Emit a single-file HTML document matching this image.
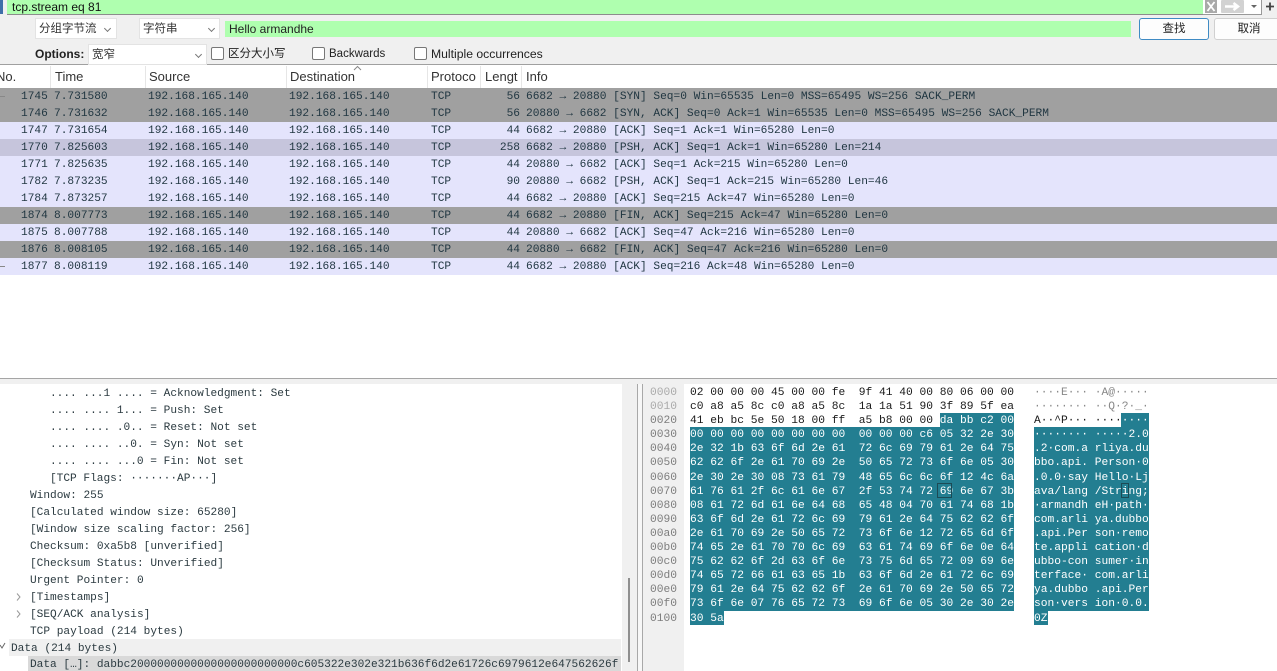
<!DOCTYPE html>
<html><head><meta charset="utf-8"><style>
html,body{margin:0;padding:0;background:#fff}
#p{position:relative;width:1277px;height:671px;overflow:hidden;background:#fff;font-family:"Liberation Sans","Noto Sans CJK SC",sans-serif;font-size:12px;color:#222}
.abs,#p div.abs{position:absolute}
.box{position:absolute;background:#fff;border:1px solid #e3e3e3;box-sizing:border-box;line-height:20px;padding-left:3px;color:#333}
.chev{position:absolute;width:4px;height:4px;border-right:1px solid #777;border-bottom:1px solid #777;transform:rotate(45deg)}
.cb{position:absolute;width:11px;height:11px;border:1px solid #777;border-radius:2px;background:#fff;top:47px}
.t{position:absolute;white-space:pre;line-height:16px}
.h{position:absolute;top:65px;height:23px;line-height:23px;font-size:13px;color:#333;white-space:pre}
.hs{position:absolute;top:66px;width:1px;height:22px;background:#e6e6e6}
.r{position:absolute;left:0;width:1277px;height:17px;line-height:17px;font-family:"Liberation Mono","DejaVu Sans Mono",monospace;font-size:11.18px;color:#1f3540;white-space:pre;background:#e4e4fc}
.r span{position:absolute;top:1px}
.r span:nth-child(1){left:21px}
.r span:nth-child(2){left:54px}
.r span:nth-child(3){left:148px}
.r span:nth-child(4){left:289px}
.r span:nth-child(5){left:431px}
.r span:nth-child(6){left:480px;width:40px;text-align:right}
.r span:nth-child(7){left:526px}
.g{background:#a0a0a0}
.d{background:#c6c5dc}
.tr{position:absolute;height:17px;line-height:17px;margin-top:1px;white-space:pre;font-family:"Liberation Mono","DejaVu Sans Mono",monospace;font-size:11.15px;color:#2b3a40}
.o,.x,.a{position:absolute;height:14.1px;line-height:14.1px;margin-top:1px;white-space:pre;font-family:"Liberation Mono","DejaVu Sans Mono",monospace;font-size:11.25px}
.o{left:650px;color:#7d7d7d}
.x{left:690px;color:#1a1a1a}
.a{left:1034px;color:#1a1a1a}
b{font-weight:normal;color:#fff}
.s{color:#fff}
.lt{color:#888}
.sel{position:absolute;background:#237e91}
</style></head><body><div id="p">

<!-- filter bar -->
<div class="abs" style="left:0;top:0;width:1277px;height:16px;background:#f0f0f0"></div>
<div class="abs" style="left:0;top:0;width:3px;height:14px;background:#3f6fa8"></div>
<div class="abs" style="left:7px;top:0;width:1196px;height:15px;background:#afffaf;border-bottom:1px solid #8c8c8c;box-sizing:border-box"></div>
<div class="t" style="left:12px;top:-1px;font-size:12px;color:#111">tcp.stream eq 81</div>
<div class="abs" style="left:1203px;top:0;width:59px;height:15px;background:#fff;border-bottom:1px solid #999;border-right:1px solid #999;box-sizing:border-box"></div>
<svg class="abs" style="left:1204px;top:0" width="73" height="15" viewBox="0 0 73 15">
<rect x="1" y="0" width="12" height="13" fill="#a9a9a9"/><path d="M3.5 2L10.500 11M10.500 2L3.500 11" stroke="#fff" stroke-width="1.8"/>
<rect x="17" y="0" width="23" height="13" rx="1" fill="#d2d2d2"/><path d="M21 6.500H33M29.500 3L34 6.500L29.500 10" stroke="#fff" stroke-width="2.500" fill="none"/>
<path d="M47 5H53L50 8Z" fill="#666"/>
<path d="M66 2.500V10.500M62 6.500H70" stroke="#444" stroke-width="1.800"/>
</svg>

<!-- toolbar -->
<div class="abs" style="left:0;top:16px;width:1277px;height:49px;background:#f0f0f0;border-bottom:1px solid #a0a0a0;box-sizing:border-box"></div>
<div class="box" style="left:35px;top:18px;width:82px;height:21px;font-size:11.5px">分组字节流</div><div class="chev" style="left:105px;top:26px"></div>
<div class="box" style="left:139px;top:18px;width:81px;height:21px;font-size:11.5px">字符串</div><div class="chev" style="left:209px;top:26px"></div>
<div class="abs" style="left:225px;top:21px;width:906px;height:16px;background:#afffaf"></div>
<div class="t" style="left:229px;top:21px;font-size:12px;color:#222">Hello armandhe</div>
<div class="abs" style="left:1139px;top:18px;width:70px;height:22px;background:#fdfdfd;border:1px solid #3f8bc4;border-radius:3px;box-sizing:border-box;text-align:center;line-height:20px;font-size:11.5px;color:#222">查找</div>
<div class="abs" style="left:1214px;top:18px;width:70px;height:22px;background:#fdfdfd;border:1px solid #d0d0d0;border-radius:3px;box-sizing:border-box;text-align:center;line-height:20px;font-size:11.5px;color:#222">取消</div>
<div class="t" style="left:35px;top:46px;font-size:12px;font-weight:bold;color:#222">Options:</div>
<div class="box" style="left:88px;top:44px;width:119px;height:21px;font-size:11.5px">宽窄</div><div class="chev" style="left:196px;top:52px"></div>
<div class="cb" style="left:211px"></div><div class="t" style="left:228px;top:46px;font-size:11.5px">区分大小写</div>
<div class="cb" style="left:312px"></div><div class="t" style="left:329px;top:46px;font-size:11.5px">Backwards</div>
<div class="cb" style="left:414px"></div><div class="t" style="left:431px;top:46px;font-size:12.2px">Multiple occurrences</div>

<!-- packet list header -->
<div class="abs" style="left:0;top:65px;width:1277px;height:23px;background:#fff"></div>
<div class="h" style="left:-4px">No.</div><div class="hs" style="left:50px"></div>
<div class="h" style="left:55px">Time</div><div class="hs" style="left:145px"></div>
<div class="h" style="left:149px">Source</div><div class="hs" style="left:286px"></div>
<div class="h" style="left:290px">Destination</div><div class="hs" style="left:427px"></div>
<div class="h" style="left:431px">Protoco</div><div class="hs" style="left:480px"></div>
<div class="h" style="left:485px">Lengt</div><div class="hs" style="left:521px"></div>
<div class="h" style="left:526px">Info</div>
<svg class="abs" style="left:353px;top:65px" width="9" height="6"><path d="M1 5L4.500 1.500L8 5" stroke="#888" fill="none"/></svg>

<!-- packets -->
<div class="r g" style="top:88px"><span>1745</span><span>7.731580</span><span>192.168.165.140</span><span>192.168.165.140</span><span>TCP</span><span>56</span><span>6682 → 20880 [SYN] Seq=0 Win=65535 Len=0 MSS=65495 WS=256 SACK_PERM</span></div>
<div class="r g" style="top:105px"><span>1746</span><span>7.731632</span><span>192.168.165.140</span><span>192.168.165.140</span><span>TCP</span><span>56</span><span>20880 → 6682 [SYN, ACK] Seq=0 Ack=1 Win=65535 Len=0 MSS=65495 WS=256 SACK_PERM</span></div>
<div class="r" style="top:122px"><span>1747</span><span>7.731654</span><span>192.168.165.140</span><span>192.168.165.140</span><span>TCP</span><span>44</span><span>6682 → 20880 [ACK] Seq=1 Ack=1 Win=65280 Len=0</span></div>
<div class="r d" style="top:139px"><span>1770</span><span>7.825603</span><span>192.168.165.140</span><span>192.168.165.140</span><span>TCP</span><span>258</span><span>6682 → 20880 [PSH, ACK] Seq=1 Ack=1 Win=65280 Len=214</span></div>
<div class="r" style="top:156px"><span>1771</span><span>7.825635</span><span>192.168.165.140</span><span>192.168.165.140</span><span>TCP</span><span>44</span><span>20880 → 6682 [ACK] Seq=1 Ack=215 Win=65280 Len=0</span></div>
<div class="r" style="top:173px"><span>1782</span><span>7.873235</span><span>192.168.165.140</span><span>192.168.165.140</span><span>TCP</span><span>90</span><span>20880 → 6682 [PSH, ACK] Seq=1 Ack=215 Win=65280 Len=46</span></div>
<div class="r" style="top:190px"><span>1784</span><span>7.873257</span><span>192.168.165.140</span><span>192.168.165.140</span><span>TCP</span><span>44</span><span>6682 → 20880 [ACK] Seq=215 Ack=47 Win=65280 Len=0</span></div>
<div class="r g" style="top:207px"><span>1874</span><span>8.007773</span><span>192.168.165.140</span><span>192.168.165.140</span><span>TCP</span><span>44</span><span>6682 → 20880 [FIN, ACK] Seq=215 Ack=47 Win=65280 Len=0</span></div>
<div class="r" style="top:224px"><span>1875</span><span>8.007788</span><span>192.168.165.140</span><span>192.168.165.140</span><span>TCP</span><span>44</span><span>20880 → 6682 [ACK] Seq=47 Ack=216 Win=65280 Len=0</span></div>
<div class="r g" style="top:241px"><span>1876</span><span>8.008105</span><span>192.168.165.140</span><span>192.168.165.140</span><span>TCP</span><span>44</span><span>20880 → 6682 [FIN, ACK] Seq=47 Ack=216 Win=65280 Len=0</span></div>
<div class="r" style="top:258px"><span>1877</span><span>8.008119</span><span>192.168.165.140</span><span>192.168.165.140</span><span>TCP</span><span>44</span><span>6682 → 20880 [ACK] Seq=216 Ack=48 Win=65280 Len=0</span></div>
<div class="abs" style="left:0;top:96px;width:5px;height:1px;background:#888"></div>
<div class="abs" style="left:0;top:266px;width:5px;height:1px;background:#888"></div>

<!-- splitter -->
<div class="abs" style="left:0;top:378px;width:1277px;height:1px;background:#a5a5a5"></div>
<div class="abs" style="left:0;top:379px;width:1277px;height:5px;background:#f0f0f0"></div>

<!-- tree pane -->
<div class="abs" style="left:622px;top:384px;width:15px;height:287px;background:#f0f0f0"></div>
<div class="abs" style="left:637px;top:384px;width:1px;height:287px;background:#a8a8a8"></div>
<div class="abs" style="left:628px;top:578px;width:2px;height:84px;background:#8f8f8f"></div>
<div class="abs" style="left:638px;top:384px;width:4px;height:287px;background:#f7f7f7"></div>
<div class="abs" style="left:642px;top:384px;width:1px;height:287px;background:#a8a8a8"></div>

<div class="tr" style="left:50px;top:385px">.... ...1 .... = Acknowledgment: Set</div>
<div class="tr" style="left:50px;top:402px">.... .... 1... = Push: Set</div>
<div class="tr" style="left:50px;top:419px">.... .... .0.. = Reset: Not set</div>
<div class="tr" style="left:50px;top:436px">.... .... ..0. = Syn: Not set</div>
<div class="tr" style="left:50px;top:453px">.... .... ...0 = Fin: Not set</div>
<div class="tr" style="left:50px;top:470px">[TCP Flags: ·······AP···]</div>
<div class="tr" style="left:30px;top:487px">Window: 255</div>
<div class="tr" style="left:30px;top:504px">[Calculated window size: 65280]</div>
<div class="tr" style="left:30px;top:521px">[Window size scaling factor: 256]</div>
<div class="tr" style="left:30px;top:538px">Checksum: 0xa5b8 [unverified]</div>
<div class="tr" style="left:30px;top:555px">[Checksum Status: Unverified]</div>
<div class="tr" style="left:30px;top:572px">Urgent Pointer: 0</div>
<div class="tr" style="left:30px;top:589px">[Timestamps]</div>
<div class="tr" style="left:30px;top:606px">[SEQ/ACK analysis]</div>
<div class="tr" style="left:30px;top:623px">TCP payload (214 bytes)</div>
<div class="abs" style="left:9px;top:639px;width:612px;height:17px;background:#f0f0f0"></div>
<div class="tr" style="left:11px;top:640px">Data (214 bytes)</div>
<div class="abs" style="left:28px;top:656px;width:593px;height:15px;background:#d9d9d9"></div>
<div class="tr" style="left:30px;top:656px;width:591px;overflow:hidden">Data […]: dabbc2000000000000000000000000c605322e302e321b636f6d2e61726c6979612e647562626f</div>
<svg class="abs" style="left:0;top:590px" width="24" height="70"><path d="M17 3.500L20 7L17 10.500M17 20.500L20 24L17 27.500" stroke="#999" fill="none"/><path d="M0 55L2 58L5 53" stroke="#666" fill="none"/></svg>

<!-- hex pane -->
<div class="abs" style="left:643px;top:384px;width:41px;height:287px;background:#f0f0f0"></div>

<!-- selection backgrounds -->
<div class="sel" style="left:940px;top:413px;width:74px;height:14px"></div>
<div class="sel" style="left:690px;top:427px;width:324px;height:184px"></div>
<div class="sel" style="left:690px;top:611px;width:34px;height:14px"></div>
<div class="sel" style="left:1121px;top:413px;width:28px;height:14px"></div>
<div class="sel" style="left:1034px;top:427px;width:115px;height:184px"></div>
<div class="sel" style="left:1034px;top:611px;width:14px;height:14px"></div>

<div class="o" style="top:385px;color:#aaa">0000</div><div class="x" style="top:385px">02 00 00 00 45 00 00 fe  9f 41 40 00 80 06 00 00</div><div class="a lt" style="top:385px">····E··· ·A@·····</div>
<div class="o" style="top:399px;color:#aaa">0010</div><div class="x" style="top:399px">c0 a8 a5 8c c0 a8 a5 8c  1a 1a 51 90 3f 89 5f ea</div><div class="a lt" style="top:399px">········ ··Q·?·_·</div>
<div class="o" style="top:413px">0020</div><div class="x" style="top:413px">41 eb bc 5e 50 18 00 ff  a5 b8 00 00 <b>da bb c2 00</b></div><div class="a" style="top:413px">A··^P··· ····<b>····</b></div>
<div class="o" style="top:427.200px">0030</div><div class="x s" style="top:427.200px">00 00 00 00 00 00 00 00  00 00 00 c6 05 32 2e 30</div><div class="a s" style="top:427.200px">········ ·····2.0</div>
<div class="o" style="top:441.300px">0040</div><div class="x s" style="top:441.300px">2e 32 1b 63 6f 6d 2e 61  72 6c 69 79 61 2e 64 75</div><div class="a s" style="top:441.300px">.2·com.a rliya.du</div>
<div class="o" style="top:455.400px">0050</div><div class="x s" style="top:455.400px">62 62 6f 2e 61 70 69 2e  50 65 72 73 6f 6e 05 30</div><div class="a s" style="top:455.400px">bbo.api. Person·0</div>
<div class="o" style="top:469.500px">0060</div><div class="x s" style="top:469.500px">2e 30 2e 30 08 73 61 79  48 65 6c 6c 6f 12 4c 6a</div><div class="a s" style="top:469.500px">.0.0·say Hello·Lj</div>
<div class="o" style="top:483.600px">0070</div><div class="x s" style="top:483.600px">61 76 61 2f 6c 61 6e 67  2f 53 74 72 69 6e 67 3b</div><div class="a s" style="top:483.600px">ava/lang /String;</div>
<div class="o" style="top:497.700px">0080</div><div class="x s" style="top:497.700px">08 61 72 6d 61 6e 64 68  65 48 04 70 61 74 68 1b</div><div class="a s" style="top:497.700px">·armandh eH·path·</div>
<div class="o" style="top:511.800px">0090</div><div class="x s" style="top:511.800px">63 6f 6d 2e 61 72 6c 69  79 61 2e 64 75 62 62 6f</div><div class="a s" style="top:511.800px">com.arli ya.dubbo</div>
<div class="o" style="top:525.900px">00a0</div><div class="x s" style="top:525.900px">2e 61 70 69 2e 50 65 72  73 6f 6e 12 72 65 6d 6f</div><div class="a s" style="top:525.900px">.api.Per son·remo</div>
<div class="o" style="top:540px">00b0</div><div class="x s" style="top:540px">74 65 2e 61 70 70 6c 69  63 61 74 69 6f 6e 0e 64</div><div class="a s" style="top:540px">te.appli cation·d</div>
<div class="o" style="top:554.100px">00c0</div><div class="x s" style="top:554.100px">75 62 62 6f 2d 63 6f 6e  73 75 6d 65 72 09 69 6e</div><div class="a s" style="top:554.100px">ubbo-con sumer·in</div>
<div class="o" style="top:568.200px">00d0</div><div class="x s" style="top:568.200px">74 65 72 66 61 63 65 1b  63 6f 6d 2e 61 72 6c 69</div><div class="a s" style="top:568.200px">terface· com.arli</div>
<div class="o" style="top:582.300px">00e0</div><div class="x s" style="top:582.300px">79 61 2e 64 75 62 62 6f  2e 61 70 69 2e 50 65 72</div><div class="a s" style="top:582.300px">ya.dubbo .api.Per</div>
<div class="o" style="top:596.400px">00f0</div><div class="x s" style="top:596.400px">73 6f 6e 07 76 65 72 73  69 6f 6e 05 30 2e 30 2e</div><div class="a s" style="top:596.400px">son·vers ion·0.0.</div>
<div class="o" style="top:610.500px">0100</div><div class="x s" style="top:610.500px">30 5a</div><div class="a s" style="top:610.500px">0Z</div>
<div class="abs" style="left:937px;top:483px;width:15px;height:15px;border:1px solid #1c4a55;box-sizing:border-box"></div>
<div class="abs" style="left:1121px;top:483px;width:8px;height:15px;border:1px solid #1c4a55;box-sizing:border-box"></div>
</div></body></html>
